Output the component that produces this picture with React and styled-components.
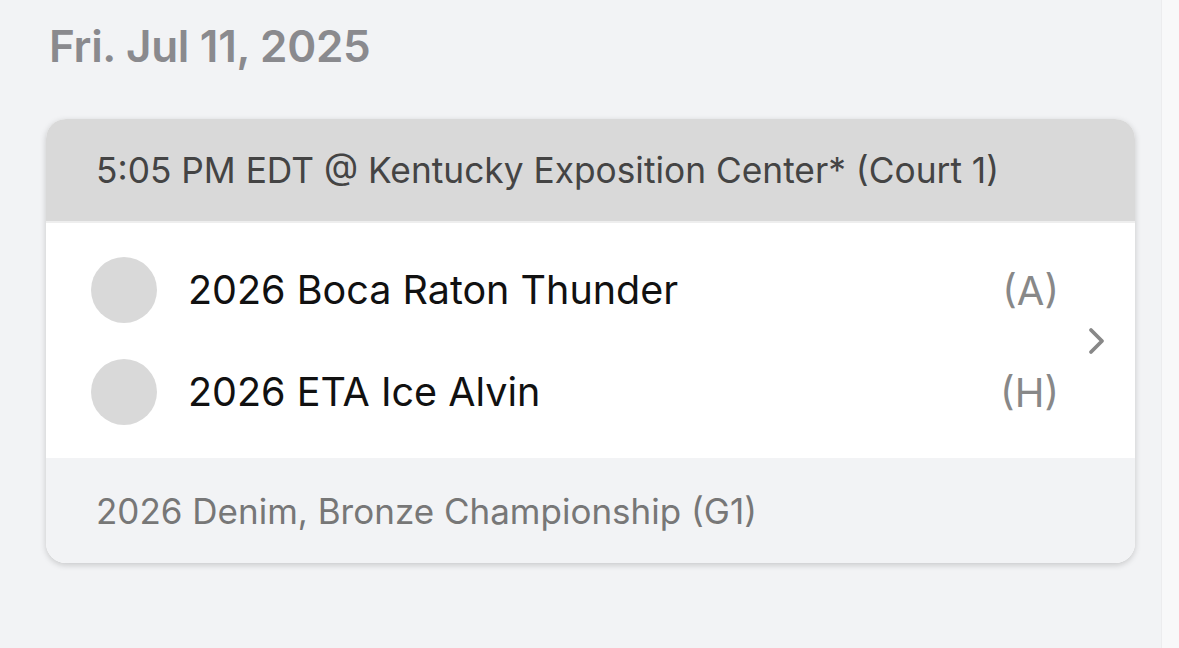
import React from 'react'
import styled, { createGlobalStyle } from 'styled-components'

const GlobalStyle = createGlobalStyle`
  html, body { margin: 0; padding: 0; }
  body {
    background: #f2f3f5;
    font-family: Inter, "Noto Sans", sans-serif;
  }
`

const Page = styled.div`
  display: flex;
  width: 1179px;
  height: 648px;
  overflow: hidden;
`

const Main = styled.div`
  flex: 1;
  padding: 22px 26px 0 46px;
`

const SideStrip = styled.div`
  width: 17px;
  background: #f8f8f9;
  border-left: 1px solid #ececee;
`

const DateTitle = styled.h2`
  margin: 0 0 0 3px;
  font-size: 44px;
  font-weight: 600;
  color: #8a8a8e;
  line-height: 48px;
  letter-spacing: -0.3px;
`

const Card = styled.div`
  margin-top: 49px;
  border-radius: 20px;
  overflow: hidden;
  background: #fff;
  box-shadow: 0 2px 6px rgba(0, 0, 0, 0.18);
`

const Header = styled.div`
  height: 102px;
  background: #d9d9d9;
  display: flex;
  align-items: center;
  padding-left: 50px;
  font-size: 35.3px;
  color: #444;
  border-bottom: 2px solid #eeeeee;
`

const Body = styled.div`
  display: flex;
  align-items: center;
  padding: 34px 27px 33px 45px;
`

const Teams = styled.div`
  flex: 1;
  display: flex;
  flex-direction: column;
  gap: 36px;
`

const TeamRow = styled.div`
  display: flex;
  align-items: center;
  height: 66px;
`

const Avatar = styled.div`
  width: 66px;
  height: 66px;
  border-radius: 50%;
  background: #d9d9d9;
  flex-shrink: 0;
`

const TeamName = styled.span`
  flex: 1;
  margin-left: 31px;
  font-size: 39.5px;
  color: #111;
`

const Side = styled.span`
  font-size: 40px;
  color: #888;
`

const Chevron = styled.svg`
  margin-left: 28px;
  flex-shrink: 0;
`

const Footer = styled.div`
  height: 105px;
  background: #f2f3f5;
  display: flex;
  align-items: center;
  padding-left: 50px;
  font-size: 35px;
  color: #777;
`

const teams = [
  { name: '2026 Boca Raton Thunder', side: '(A)' },
  { name: '2026 ETA Ice Alvin', side: '(H)' },
]

export default function App() {
  return (
    <>
      <GlobalStyle />
      <Page>
        <Main>
          <DateTitle>Fri. Jul 11, 2025</DateTitle>
          <Card>
            <Header>5:05 PM EDT @ Kentucky Exposition Center* (Court 1)</Header>
            <Body>
              <Teams>
                {teams.map(t => (
                  <TeamRow key={t.name}>
                    <Avatar />
                    <TeamName>{t.name}</TeamName>
                    <Side>{t.side}</Side>
                  </TeamRow>
                ))}
              </Teams>
              <Chevron width="21" height="30" viewBox="0 0 21 30">
                <path d="M4 4 L15 15 L4 26" fill="none" stroke="#888" strokeWidth="3.8" strokeLinecap="round" strokeLinejoin="round" />
              </Chevron>
            </Body>
            <Footer>2026 Denim, Bronze Championship (G1)</Footer>
          </Card>
        </Main>
        <SideStrip />
      </Page>
    </>
  )
}
